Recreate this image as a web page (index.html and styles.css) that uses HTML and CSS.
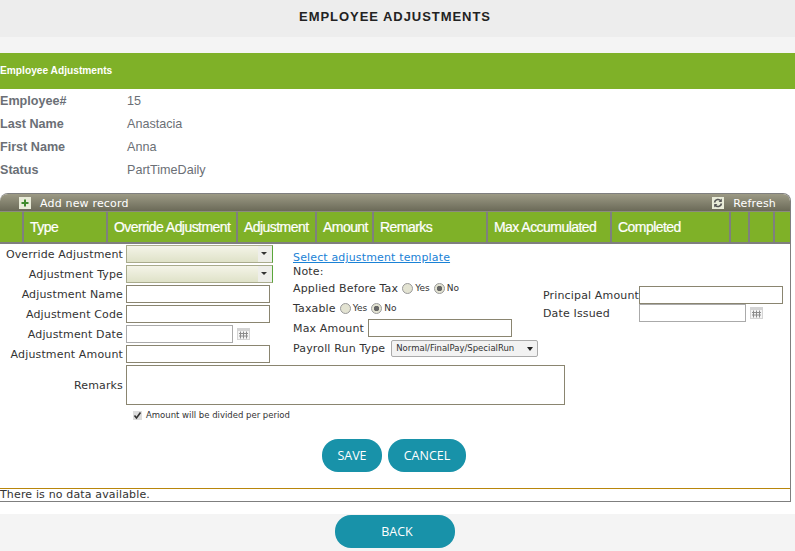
FILE: index.html
```html
<!DOCTYPE html>
<html lang="en">

<head>
    <meta charset="UTF-8">
    <meta name="viewport" content="width=device-width, initial-scale=1.0">
    <title>Employee Adjustments</title>
    <link rel="stylesheet" href="styles.css">
</head>

<body>

    <header class="page-title">EMPLOYEE ADJUSTMENTS</header>

    <div class="panel">
        <div class="panel-head">Employee Adjustments</div>
        <dl class="info">
            <dt>Employee#</dt>
            <dd>15</dd>
            <dt>Last Name</dt>
            <dd>Anastacia</dd>
            <dt>First Name</dt>
            <dd>Anna</dd>
            <dt>Status</dt>
            <dd>PartTimeDaily</dd>
        </dl>

        <div class="grid">
            <div class="toolbar">
                <span class="tool">
                    <span class="tool-icon">
                        <svg width="12" height="12" viewBox="0 0 12 12">
                            <path d="M6 2.5v7M2.5 6h7" stroke="#3f8a2c" stroke-width="2" fill="none" />
                        </svg>
                    </span>
                    Add new record
                </span>
                <span class="tool">
                    <span class="tool-icon">
                        <svg width="12" height="12" viewBox="0 0 12 12">
                            <path d="M2.5 5.5A3.6 3.6 0 0 1 9 4M9.5 6.5A3.6 3.6 0 0 1 3 8" stroke="#555" stroke-width="1.6" fill="none" />
                            <path d="M9.8 1.5v3.4H6.6zM2.2 10.5V7.1h3.2z" fill="#555" />
                        </svg>
                    </span>
                    Refresh
                </span>
            </div>

            <div class="grid-cols">
                <div></div>
                <div>Type</div>
                <div>Override Adjustment</div>
                <div>Adjustment</div>
                <div>Amount</div>
                <div>Remarks</div>
                <div>Max Accumulated</div>
                <div>Completed</div>
                <div></div>
                <div></div>
                <div></div>
            </div>

            <form class="form">
                <div class="form-top">
                    <div class="fields">
                        <label>Override Adjustment</label>
                        <div class="combo"><span class="combo-btn"></span></div>
                        <label>Adjustment Type</label>
                        <div class="combo"><span class="combo-btn"></span></div>
                        <label>Adjustment Name</label>
                        <input class="text" type="text">
                        <label>Adjustment Code</label>
                        <input class="text" type="text">
                        <label>Adjustment Date</label>
                        <div class="date-wrap">
                            <input class="text date" type="text">
                            <svg class="cal" width="13" height="12" viewBox="0 0 13 12">
                                <rect x="0" y="0" width="13" height="12" fill="#d4d4d4" />
                                <rect x="1" y="3" width="11" height="8" fill="#f4f4f4" />
                                <path d="M2 5.5h9M2 8h9M3.5 3.5v7M6.5 3.5v7M9.5 3.5v7" stroke="#8c8c8c" stroke-width="1" fill="none" />
                            </svg>
                        </div>
                        <label>Adjustment Amount</label>
                        <input class="text" type="text">
                    </div>

                    <div class="middle">
                        <a class="template-link" href="#">Select adjustment template</a>
                        <div class="note">Note:</div>
                        <div class="opt-row">
                            Applied Before Tax
                            <span class="radio"></span><small>Yes</small>
                            <span class="radio on"></span><small>No</small>
                        </div>
                        <div class="opt-row">
                            Taxable
                            <span class="radio"></span><small>Yes</small>
                            <span class="radio on"></span><small>No</small>
                        </div>
                        <div class="mid-field">
                            Max Amount
                            <input class="text" type="text">
                        </div>
                        <div class="mid-field run-field">
                            Payroll Run Type
                            <span class="run-select">Normal/FinalPay/SpecialRun<i class="run-arrow"></i></span>
                        </div>
                    </div>

                    <div class="right">
                        <label>Principal Amount</label>
                        <input class="text" type="text">
                        <label>Date Issued</label>
                        <div class="date-wrap">
                            <input class="text date" type="text">
                            <svg class="cal" width="13" height="12" viewBox="0 0 13 12">
                                <rect x="0" y="0" width="13" height="12" fill="#d4d4d4" />
                                <rect x="1" y="3" width="11" height="8" fill="#f4f4f4" />
                                <path d="M2 5.5h9M2 8h9M3.5 3.5v7M6.5 3.5v7M9.5 3.5v7" stroke="#8c8c8c" stroke-width="1" fill="none" />
                            </svg>
                        </div>
                    </div>
                </div>

                <div class="remarks-row">
                    <label>Remarks</label>
                    <textarea class="remarks"></textarea>
                </div>
                <div class="divide">
                    <span class="check">
                        <svg width="9" height="9" viewBox="0 0 9 9">
                            <path d="M1.5 4.5l2 2.5 4-5.5" stroke="#333" stroke-width="1.6" fill="none" />
                        </svg>
                    </span>
                    Amount will be divided per period
                </div>
                <div class="actions">
                    <button type="button" class="btn btn-save">SAVE</button>
                    <button type="button" class="btn btn-cancel">CANCEL</button>
                </div>
            </form>

            <div class="no-data">There is no data available.</div>
        </div>
    </div>

    <footer class="footer">
        <button type="button" class="btn btn-back">BACK</button>
    </footer>

</body>

</html>
```

FILE: styles.css
```css
* {
    box-sizing: border-box;
}

html,
body {
    margin: 0;
    padding: 0;
}

body {
    width: 795px;
    height: 551px;
    overflow: hidden;
    background-color: #f4f4f4;
    font-family: "DejaVu Sans", sans-serif;
    font-size: 11px;
    letter-spacing: 0.15px;
    color: #333;
}

.page-title {
    height: 37px;
    padding-right: 5px;
    line-height: 34px;
    background-color: #ededed;
    text-align: center;
    font-family: "Liberation Sans", sans-serif;
    font-size: 13px;
    font-weight: bold;
    letter-spacing: 0.95px;
    color: #222;
    margin-bottom: 16px;
}

.panel {
    height: 461px;
    background-color: #fff;
}

.panel-head {
    height: 36px;
    line-height: 36px;
    background-color: #7fb128;
    color: #fff;
    font-family: "Liberation Sans", sans-serif;
    font-size: 10.2px;
    font-weight: bold;
    letter-spacing: 0;
}

.info {
    display: grid;
    grid-template-columns: 127px 1fr;
    grid-auto-rows: 23px;
    margin: 0 0 12px;
    font-family: "Liberation Sans", sans-serif;
    font-size: 12.6px;
    letter-spacing: 0;
    line-height: 24px;
    color: #6b6f76;
}

.info dt {
    font-weight: bold;
}

.info dd {
    margin: 0;
}

.grid {
    width: 791px;
    height: 309px;
    border: 1px solid #7f7f7f;
    border-left: none;
    border-radius: 8px 8px 0 0;
    overflow: hidden;
}

.toolbar {
    height: 18px;
    display: flex;
    justify-content: space-between;
    padding: 0 14px 0 19px;
    background: linear-gradient(#9c9a85, #6b6a58);
    color: #fff;
    letter-spacing: 0.18px;
    border-bottom: 1px solid #8b8b80;
}

.tool {
    display: flex;
    align-items: center;
    gap: 9px;
    padding-top: 2px;
}

.tool-icon {
    width: 12px;
    height: 12px;
    margin-top: -2px;
    background-color: #e9ecd9;
    display: flex;
}

.grid-cols {
    height: 32px;
    display: grid;
    grid-template-columns: 24px 84px 130px 79px 57px 114px 124px 119px 19px 25px 1fr;
    background-color: #7fb128;
    border-bottom: 2px solid #7f7f7f;
    font-family: "Liberation Sans", sans-serif;
    font-size: 14px;
    letter-spacing: -0.55px;
    font-weight: normal;
    line-height: 30px;
    color: #fff;
    -webkit-text-stroke: 0.2px #fff;
}

.grid-cols div {
    padding-left: 6px;
    border-right: 2px solid #7f7f7f;
    white-space: nowrap;
}

.grid-cols div:last-child {
    border-right: none;
}

.form {
    height: 244px;
}

.form-top {
    display: flex;
    height: 121px;
}

.fields {
    width: 293px;
    padding-top: 1px;
    display: grid;
    grid-template-columns: 123px 165px;
    grid-auto-rows: 20px;
    column-gap: 3px;
    align-items: start;
}

.fields label {
    text-align: right;
    line-height: 20px;
}

.text {
    display: block;
    width: 144px;
    height: 18px;
    margin: 0;
    border: 1px solid #8a8570;
    background-color: #fff;
    padding: 0 2px;
}

.date {
    width: 107px;
    border-color: #aaa;
}

.combo {
    width: 147px;
    height: 18px;
    position: relative;
    background: linear-gradient(#f4f4e8, #dfe2c8);
    border: 1px solid #a9ab8c;
    border-right: 1px solid #5aa63a;
}

.combo-btn {
    position: absolute;
    top: 0;
    right: 0;
    width: 14px;
    height: 16px;
    background-color: #eeeeea;
}

.combo-btn::after {
    content: "";
    position: absolute;
    top: 6px;
    left: 3px;
    border-left: 3px solid transparent;
    border-right: 3px solid transparent;
    border-top: 3px solid #333;
}

.date-wrap {
    display: flex;
    align-items: center;
    gap: 4px;
}

.middle {
    width: 250px;
    padding-top: 7px;
}

.template-link {
    display: block;
    height: 14px;
    line-height: 14px;
    color: #1a82d6;
    text-decoration: underline;
}

.note {
    height: 14px;
    line-height: 14px;
}

.opt-row {
    display: flex;
    align-items: center;
    height: 20px;
    white-space: nowrap;
}

.note + .opt-row {
    margin-top: -1px;
}

.radio {
    width: 11px;
    height: 11px;
    margin-left: 4px;
    border: 1px solid #999;
    border-radius: 50%;
    background-color: #e3e3d2;
}

.radio.on {
    margin-left: 4px;
    background: radial-gradient(circle, #666 0 2.5px, #e3e3d2 3px);
}

.opt-row small {
    margin-left: 2px;
    font-size: 9px;
    letter-spacing: 0;
}

.mid-field {
    display: flex;
    align-items: center;
    gap: 4px;
    height: 20px;
    white-space: nowrap;
}

.run-field {
    gap: 6px;
}

.run-select {
    position: relative;
    width: 147px;
    height: 17px;
    padding-left: 4px;
    line-height: 15px;
    font-size: 8.5px;
    letter-spacing: 0;
    border: 1px solid #aaa;
    border-radius: 2px;
    background-color: #f2f2f2;
}

.run-arrow {
    position: absolute;
    top: 6px;
    right: 4px;
    border-left: 3px solid transparent;
    border-right: 3px solid transparent;
    border-top: 4px solid #222;
}

.right {
    padding-top: 42px;
    display: grid;
    grid-template-columns: 96px 150px;
    grid-auto-rows: 18px;
    align-items: center;
}

.remarks-row {
    display: flex;
    align-items: center;
    gap: 3px;
}

.remarks-row label {
    width: 123px;
    text-align: right;
}

.remarks {
    display: block;
    width: 439px;
    height: 40px;
    margin: 0;
    border: 1px solid #8a8570;
    resize: none;
}

.divide {
    display: flex;
    align-items: center;
    height: 20px;
    padding-left: 133px;
    font-size: 8.5px;
    letter-spacing: 0;
    gap: 4px;
}

.check {
    width: 9px;
    height: 9px;
    display: flex;
    background-color: #ddd;
}

.actions {
    display: flex;
    gap: 6px;
    margin-top: 14px;
    padding-left: 322px;
}

.btn {
    height: 33px;
    border: none;
    border-radius: 16px;
    background-color: #1892a9;
    color: #fff;
    font-family: "Open Sans", sans-serif;
    font-size: 12.5px;
    letter-spacing: 0;
}

.btn-save {
    width: 60px;
}

.btn-cancel {
    width: 78px;
}

.no-data {
    height: 13px;
    border-top: 1px solid #b8860b;
    line-height: 12px;
}

.footer {
    height: 37px;
    padding-top: 1px;
    padding-right: 5px;
    display: flex;
    justify-content: center;
    background-color: #f4f4f4;
}

.btn-back {
    width: 120px;
    padding-left: 10px;
}
```
